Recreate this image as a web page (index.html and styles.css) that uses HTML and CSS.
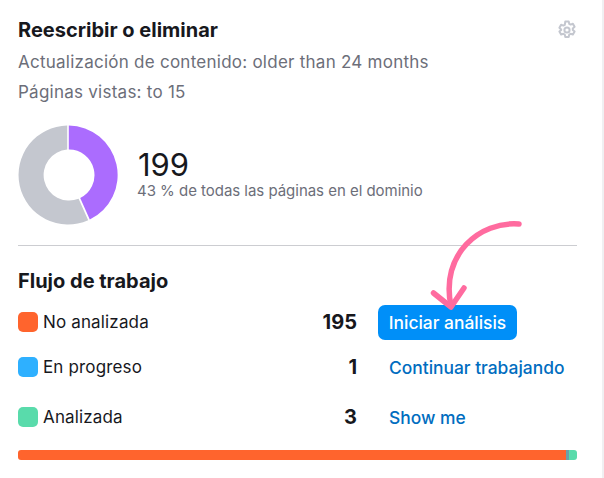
FILE: index.html
```html
<!DOCTYPE html>
<html lang="es">
<head>
<meta charset="utf-8">
<title>Reescribir o eliminar</title>
<link rel="stylesheet" href="styles.css">
</head>
<body>
<main class="card">
  <header class="head">
    <h2 class="title">Reescribir o eliminar</h2>
    <svg class="gear" viewBox="0 0 20 20" width="20" height="20" fill="none" stroke="#c4c7cf" stroke-width="2" stroke-linejoin="round" aria-hidden="true">
      <path d="M8.3 1.4h3.4l.5 2.4 1.4.8 2.3-.8 1.7 3-1.8 1.6v1.6l1.8 1.6-1.7 3-2.3-.8-1.4.8-.5 2.4H8.3l-.5-2.4-1.4-.8-2.3.8-1.7-3 1.8-1.6V9.4L2.4 7.8l1.7-3 2.3.8 1.4-.8z"/>
      <circle cx="10" cy="10" r="2.6"/>
    </svg>
  </header>
  <p class="filter first">Actualización de contenido: older than 24 months</p>
  <p class="filter second">Páginas vistas: to 15</p>
  <section class="summary">
    <svg class="donut" viewBox="0 0 100 100" width="100" height="100" aria-hidden="true">
      <path fill="#c4c7cf" d="M49.2 0.5A49.5 49.5 0 1 0 70.2 95.2L60.6 73.7A25.5 25.5 0 1 1 49.2 24.6Z"/>
      <path fill="#ab6cfe" d="M50.8 0.5A49.5 49.5 0 0 1 71.8 94.5L62.2 73A25.5 25.5 0 0 0 50.8 24.6Z"/>
    </svg>
    <div class="stat">
      <div class="num">199</div>
      <div class="sub">43 % de todas las páginas en el dominio</div>
    </div>
  </section>
  <hr class="rule">
  <h3 class="subtitle">Flujo de trabajo</h3>
  <div class="rows">
    <div class="row r1">
      <span class="dot orange"></span><span class="label">No analizada</span>
      <b class="count">195</b><a class="btn">Iniciar análisis</a>
    </div>
    <div class="row r2">
      <span class="dot blue"></span><span class="label">En progreso</span>
      <b class="count">1</b><a class="link">Continuar trabajando</a>
    </div>
    <div class="row r3">
      <span class="dot green"></span><span class="label">Analizada</span>
      <b class="count">3</b><a class="link">Show me</a>
    </div>
  </div>
  <div class="bar"><span class="seg-o"></span><span class="seg-b"></span><span class="seg-g"></span></div>
  <svg class="arrow" viewBox="0 0 100 100" width="100" height="100" fill="none" stroke="#ff6b9f" stroke-width="5.5" stroke-linecap="round" stroke-linejoin="round" aria-hidden="true">
    <path d="M89 5C50 2 10 35 21 87"/>
    <path d="M3.5 74L21 88L34 69"/>
  </svg>
</main>
</body>
</html>
```
FILE: styles.css
```css
* { box-sizing: border-box; }
html, body { margin: 0; padding: 0; background: #fff; }
body { width: 604px; height: 478px; overflow: hidden; font-family: Inter, "Liberation Sans", sans-serif; }
.card {
  position: relative;
  width: 604px;
  height: 478px;
  padding: 18px 25px 0 18px;
  border-right: 2px solid #f0f0f2;
}
.head { display: flex; justify-content: space-between; align-items: center; height: 24px; }
.title { margin: 0; font-size: 20px; font-weight: 700; color: #17181d; line-height: 24px; }
.filter { margin: 0; font-size: 17px; line-height: 24px; color: #6c6e79; letter-spacing: 0.25px; }
.first { margin-top: 8px; }
.second { margin-top: 6px; }
.summary { display: flex; align-items: center; margin-top: 21px; height: 100px; }
.stat { margin-left: 19px; }
.num { font-size: 31px; line-height: 34px; color: #17181d; font-weight: 400; margin-top: -3px; padding-left: 1px; }
.sub { font-size: 15px; line-height: 18px; color: #6c6e79; letter-spacing: -0.03px; }
.rule { margin: 20px 0 0; border: 0; border-top: 1px solid #cccdd1; }
.subtitle { margin: 23px 0 0; font-size: 20px; line-height: 24px; font-weight: 700; color: #17181d; }
.row { display: flex; align-items: center; height: 36px; }
.rows { margin-top: 11px; }
.r2 { margin-top: 9px; }
.r3 { margin-top: 14px; }
.dot { width: 20px; height: 20px; border-radius: 5px; flex: none; }
.orange { background: #ff642d; }
.blue { background: #2eb0ff; }
.green { background: #59dbab; }
.label { margin-left: 5px; font-size: 17px; color: #17181d; width: 272px; letter-spacing: 0.15px; }
.count { width: 42px; text-align: right; font-size: 20px; font-weight: 700; color: #17181d; }
.btn {
  margin-left: 21px;
  height: 35px;
  width: 139px;
  display: flex;
  align-items: center;
  justify-content: center;
  border-radius: 7px;
  background: #008ff8;
  color: #fff;
  font-size: 17.4px;
  font-weight: 500;
}
.link { margin-left: 32px; color: #006dc0; font-size: 17.4px; font-weight: 500; }
.bar { display: flex; margin-top: 15px; height: 10px; border-radius: 3px; overflow: hidden; }
.seg-o { flex: 548; background: #ff642d; }
.seg-b { flex: 3; background: #6ea0a8; }
.seg-g { flex: 8; background: #59dbab; }
.arrow { position: absolute; left: 430px; top: 219px; }
```
